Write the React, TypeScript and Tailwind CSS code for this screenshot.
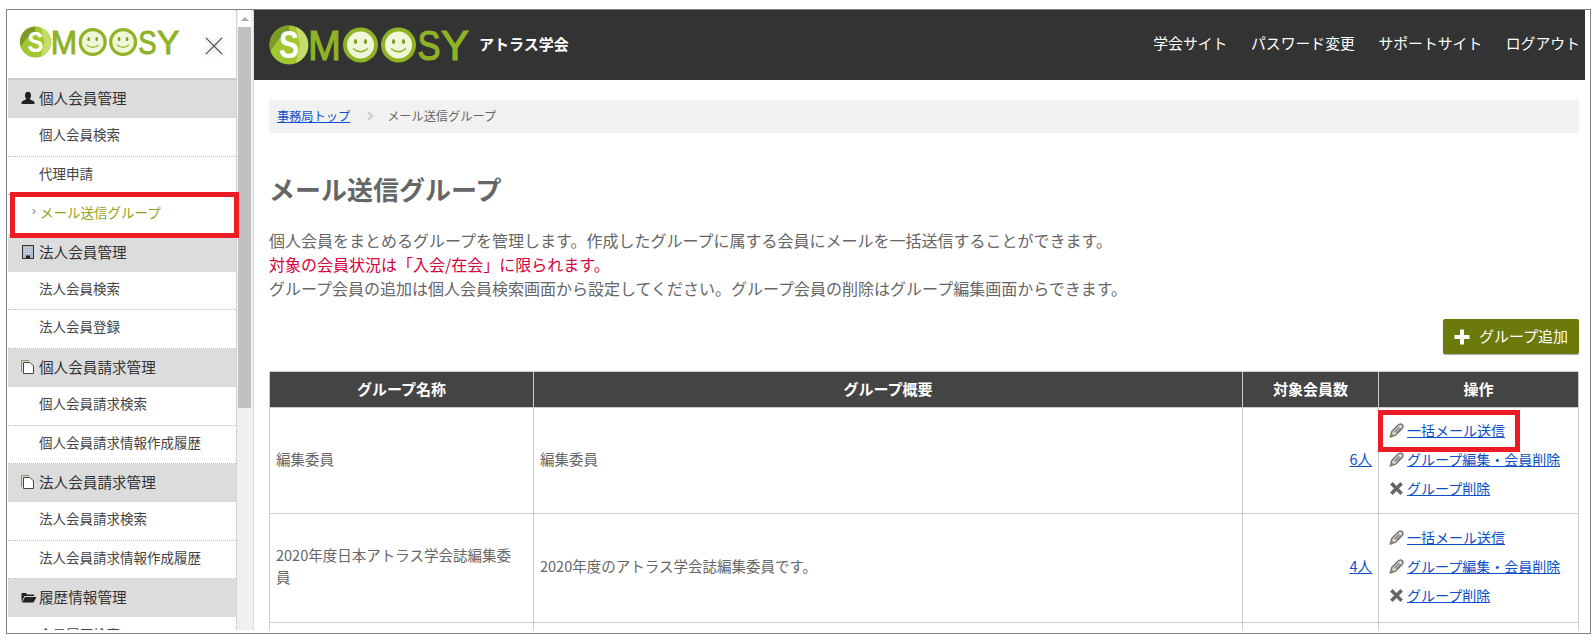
import React from "react";

function Smiley({ cx }: { cx: number }) {
  return (
    <g>
      <circle cx={cx} cy={20} r={17.5} fill="#8fb327" />
      <circle cx={cx} cy={20} r={13.5} fill="#f0f6d8" />
      <ellipse cx={cx - 5} cy={16.5} rx={1.6} ry={2.6} fill="#7f9f22" />
      <ellipse cx={cx + 5} cy={16.5} rx={1.6} ry={2.6} fill="#7f9f22" />
      <path d={`M${cx - 7.5} 23.5 Q${cx} 30 ${cx + 7.5} 23.5`} fill="none" stroke="#8fb327" strokeWidth={1.4} />
    </g>
  );
}

function Logo({ className }: { className: string }) {
  return (
    <svg viewBox="0 0 200 40" className={className}>
      <circle cx={20} cy={20} r={19.5} fill="#a3c72f" />
      <path d="M20 .5A19.500 19.500 0 0 0 1.500 26L10 14 20 6Z" fill="#7d9a26" />
      <path d="M27 2A19.500 19.500 0 0 1 27 38L31 20Z" fill="#c5dc6e" />
      <text x={10} y={33} textLength={20} lengthAdjust="spacingAndGlyphs" fontFamily="Liberation Sans" fontWeight={700} fontSize={38} fill="#fff">S</text>
      <text x={39} y={35} textLength={33} lengthAdjust="spacingAndGlyphs" fontFamily="Liberation Sans" fontSize={42} fill="#8fb327" stroke="#8fb327" strokeWidth={1.2}>M</text>
      <Smiley cx={91.5} />
      <Smiley cx={129.5} />
      <text x={148.500} y={35} textLength={23} lengthAdjust="spacingAndGlyphs" fontFamily="Liberation Sans" fontSize={42} fill="#8fb327" stroke="#8fb327" strokeWidth={1.2}>S</text>
      <text x={172} y={35} textLength={28} lengthAdjust="spacingAndGlyphs" fontFamily="Liberation Sans" fontSize={42} fill="#8fb327" stroke="#8fb327" strokeWidth={1.2}>Y</text>
    </svg>
  );
}

function Pencil() {
  return (
    <svg viewBox="0 0 16 16" className="w-[15px] h-[15px] shrink-0 mr-[3px]">
      <path d="M1.500 14.800 3 9 9.500 2.500C11 1 13 1 14.200 2 15.300 3.200 15 5 13.500 6.500L7 13Z" fill="#ddd" stroke="#777" strokeWidth={1.6} />
      <path d="M1.500 14.800 4 12" stroke="#b5763a" strokeWidth={2} />
      <path d="M5.500 10 11 4.500M8 10.500 12.500 6" stroke="#777" strokeWidth={1.3} />
    </svg>
  );
}

function Cross() {
  return (
    <svg viewBox="0 0 16 16" className="w-[15px] h-[15px] shrink-0 mr-[3px]">
      <path d="M2.500 2.500 13.500 13.500M13.500 2.500 2.500 13.500" stroke="#666" strokeWidth={3.8} />
    </svg>
  );
}

function PersonIcon() {
  return (
    <svg viewBox="0 0 14 14" className="w-[14px] h-[14px]">
      <ellipse cx={7} cy={4.500} rx={3} ry={3.800} fill="#222" />
      <path d="M0.500 13V11.500C1 9.500 4 9.500 5 8H9C10 9.500 13 9.500 13.500 11.500V13Z" fill="#222" />
    </svg>
  );
}

function BuildingIcon() {
  return (
    <svg viewBox="0 0 14 14" className="w-[14px] h-[14px]">
      <rect x={1.500} y={0.500} width={11} height={13} fill="#a9bcd2" stroke="#333" />
      <path d="M3 2.500H11M3 4.500H11M3 6.500H11M3 8.500H11" stroke="#e2e6ee" strokeWidth={1} strokeDasharray="1 1" />
      <rect x={5} y={10.500} width={4} height={2.500} fill="#222" />
    </svg>
  );
}

function CopyIcon() {
  return (
    <svg viewBox="0 0 14 14" className="w-[14px] h-[14px]">
      <path d="M0.500 12V0.500H8" fill="none" stroke="#a08a60" strokeWidth={1} />
      <path d="M2.500 13.500V2.500H9L12.500 6V13.500Z" fill="#fff" stroke="#444" strokeWidth={1} />
    </svg>
  );
}

function FolderIcon() {
  return (
    <svg viewBox="0 0 16 14" className="w-[16px] h-[14px]">
      <path d="M0.500 12V3H5L6 4.500H13V6H3.500Z" fill="#222" />
      <path d="M1 12.500 4 7H15.500L12.500 12.500Z" fill="#222" />
    </svg>
  );
}

type Row = { kind: "head"; label: string; icon: React.ReactNode } | { kind: "item"; label: string; active?: boolean };

const rows: Row[] = [
  { kind: "head", label: "個人会員管理", icon: <PersonIcon /> },
  { kind: "item", label: "個人会員検索" },
  { kind: "item", label: "代理申請" },
  { kind: "item", label: "メール送信グループ", active: true },
  { kind: "head", label: "法人会員管理", icon: <BuildingIcon /> },
  { kind: "item", label: "法人会員検索" },
  { kind: "item", label: "法人会員登録" },
  { kind: "head", label: "個人会員請求管理", icon: <CopyIcon /> },
  { kind: "item", label: "個人会員請求検索" },
  { kind: "item", label: "個人会員請求情報作成履歴" },
  { kind: "head", label: "法人会員請求管理", icon: <CopyIcon /> },
  { kind: "item", label: "法人会員請求検索" },
  { kind: "item", label: "法人会員請求情報作成履歴" },
  { kind: "head", label: "履歴情報管理", icon: <FolderIcon /> },
  { kind: "item", label: "会員履歴検索" },
];

function Sidebar() {
  return (
    <div className="w-[247px] h-[620px] shrink-0 flex overflow-hidden border-r border-dotted border-[#bbb]">
      <div className="w-[229px] shrink-0 pl-[1px]">
        <div className="h-[70px] flex items-center pl-[11px] pb-[4px] border-b-2 border-[#ccc]">
          <Logo className="w-[161px] h-[32px] shrink-0" />
          <svg viewBox="0 0 20 20" className="w-[18px] h-[18px] ml-[25px] mt-[8px] shrink-0" style={{ filter: "drop-shadow(0 0 3px #aaa)" }}>
            <path d="M1 1 19 19M19 1 1 19" stroke="#444" strokeWidth={1.2} fill="none" />
          </svg>
        </div>
        {rows.map((r, i) =>
          r.kind === "head" ? (
            <div key={i} className="h-[38.400px] bg-[#dcdcdc] flex items-center pl-[13px] pb-[2px] text-[14.600px] text-[#333]">
              <span className="w-[18px] flex shrink-0">{r.icon}</span>
              <span>{r.label}</span>
            </div>
          ) : r.active ? (
            <div key={i} className="h-[38.400px] flex items-center pl-[24px] pb-[5px] text-[13.500px] text-[#94a01e]">
              <svg viewBox="0 0 5 8" className="w-[4px] h-[7px] mr-[4px] shrink-0"><path d="M1 1 4 4 1 7" fill="none" stroke="#555" strokeWidth={1.2} /></svg>
              <span>{r.label}</span>
            </div>
          ) : (
            <div key={i} className="h-[38.400px] flex items-center pl-[31px] pb-[5px] text-[13.500px] text-[#444] border-b border-dotted border-[#bbb]">
              {r.label}
            </div>
          )
        )}
      </div>
      <div className="w-[17px] shrink-0 border-l border-dotted border-[#bbb] bg-[#f0f0f0] pl-[1px] flex flex-col items-start">
        <div className="h-[17px] w-[13px] flex items-center justify-center bg-white">
          <div className="w-0 h-0 border-l-[4px] border-r-[4px] border-b-[4px] border-l-transparent border-r-transparent border-b-[#aaa]" />
        </div>
        <div className="w-[13px] h-[381px] bg-[#c1c1c1]" />
      </div>
    </div>
  );
}

function Header() {
  return (
    <div className="h-[70px] bg-[#333] flex items-center pl-[15px] pr-[5px]">
      <Logo className="w-[200px] h-[40px] shrink-0" />
      <span className="ml-[10px] pb-[1px] text-[15px] font-bold text-white">アトラス学会</span>
      <nav className="ml-auto pb-[3px] flex gap-[23.500px] text-[14.850px] text-white">
        <span>学会サイト</span>
        <span>パスワード変更</span>
        <span>サポートサイト</span>
        <span>ログアウト</span>
      </nav>
    </div>
  );
}

function Ops() {
  return (
    <div className="flex flex-col gap-[7px] text-[14px] leading-[22px] text-[#0b4fc9]">
      <span className="flex items-center"><Pencil /><span className="underline">一括メール送信</span></span>
      <span className="flex items-center"><Pencil /><span className="underline">グループ編集・会員削除</span></span>
      <span className="flex items-center"><Cross /><span className="underline">グループ削除</span></span>
    </div>
  );
}

function Main() {
  const th = "border border-[#ccc] bg-[#444] text-white font-bold text-[15px] h-[36px] text-center";
  const td = "border border-[#ccc] px-[6px] pb-[3px] text-[14.500px] leading-[22px] text-[#666]";
  return (
    <div className="flex-1 min-w-0 mr-[5px] h-[620px] overflow-hidden">
      <Header />
      <div className="pl-[15px] pr-[6px]">
        <div className="mt-[20px] h-[33px] bg-[#f1f1f1] flex items-center pl-[8px] pb-[1px] text-[12.200px] text-[#666]">
          <span className="underline text-[#0b4fc9]">事務局トップ</span>
          <svg viewBox="0 0 6 10" className="w-[6px] h-[10px] ml-[17px] mr-[14px] shrink-0"><path d="M1 1 5 5 1 9" fill="none" stroke="#ccc" strokeWidth={2} /></svg>
          <span>メール送信グループ</span>
        </div>
        <h1 className="mt-[37px] text-[26px] leading-[38px] font-bold text-[#666]">メール送信グループ</h1>
        <div className="mt-[20px] text-[16px] leading-[24px] text-[#666] [text-spacing-trim:space-all]">
          <p>個人会員をまとめるグループを管理します。作成したグループに属する会員にメールを一括送信することができます。</p>
          <p className="text-[#d6003c]">対象の会員状況は「入会/在会」に限られます。</p>
          <p>グループ会員の追加は個人会員検索画面から設定してください。グループ会員の削除はグループ編集画面からできます。</p>
        </div>
        <div className="mt-[19px] flex justify-end">
          <div className="w-[136px] h-[35px] bg-[#6c7a0b] rounded-[2px] flex items-center justify-center gap-[9px] text-[15px] text-white shadow-[0_1px_1px_#aaa]">
            <svg viewBox="0 0 16 16" className="w-[16px] h-[16px]"><path d="M8 0.500V15.500M0.500 8H15.500" stroke="#fff" strokeWidth={4} /></svg>
            <span>グループ追加</span>
          </div>
        </div>
        <table className="mt-[17px] w-full table-fixed border-collapse">
          <colgroup>
            <col className="w-[264px]" />
            <col className="w-[709px]" />
            <col className="w-[136px]" />
            <col />
          </colgroup>
          <thead>
            <tr>
              <th className={th}>グループ名称</th>
              <th className={th}>グループ概要</th>
              <th className={th}>対象会員数</th>
              <th className={th}>操作</th>
            </tr>
          </thead>
          <tbody>
            <tr className="h-[106px]">
              <td className={td}>編集委員</td>
              <td className={td}>編集委員</td>
              <td className={td + " text-right"}><span className="underline text-[#0b4fc9]">6人</span></td>
              <td className={td + " pl-[10px]"}><Ops /></td>
            </tr>
            <tr className="h-[108.500px]">
              <td className={td + " pr-[12px]"}>2020年度日本アトラス学会誌編集委員</td>
              <td className={td}>2020年度のアトラス学会誌編集委員です。</td>
              <td className={td + " text-right"}><span className="underline text-[#0b4fc9]">4人</span></td>
              <td className={td + " pl-[10px]"}><Ops /></td>
            </tr>
            <tr className="h-[40px]">
              <td className={td} /><td className={td} /><td className={td} /><td className={td} />
            </tr>
          </tbody>
        </table>
      </div>
    </div>
  );
}

export default function App() {
  return (
    <div className="relative w-[1593px] h-[641px] bg-white overflow-hidden" style={{ fontFamily: '"Noto Sans CJK JP", "Noto Sans", sans-serif' }}>
      <div className="ml-[6px] mt-[9px] w-[1585px] h-[625px] border border-[#808080] absolute">
        <div className="flex">
          <Sidebar />
          <Main />
        </div>
      </div>
      <div className="absolute left-[10px] top-[192px] w-[229px] h-[46px] border-[5px] border-[#ed1c24]" />
      <div className="absolute left-[1378px] top-[410px] w-[142px] h-[42px] border-[5px] border-[#ed1c24]" />
    </div>
  );
}
